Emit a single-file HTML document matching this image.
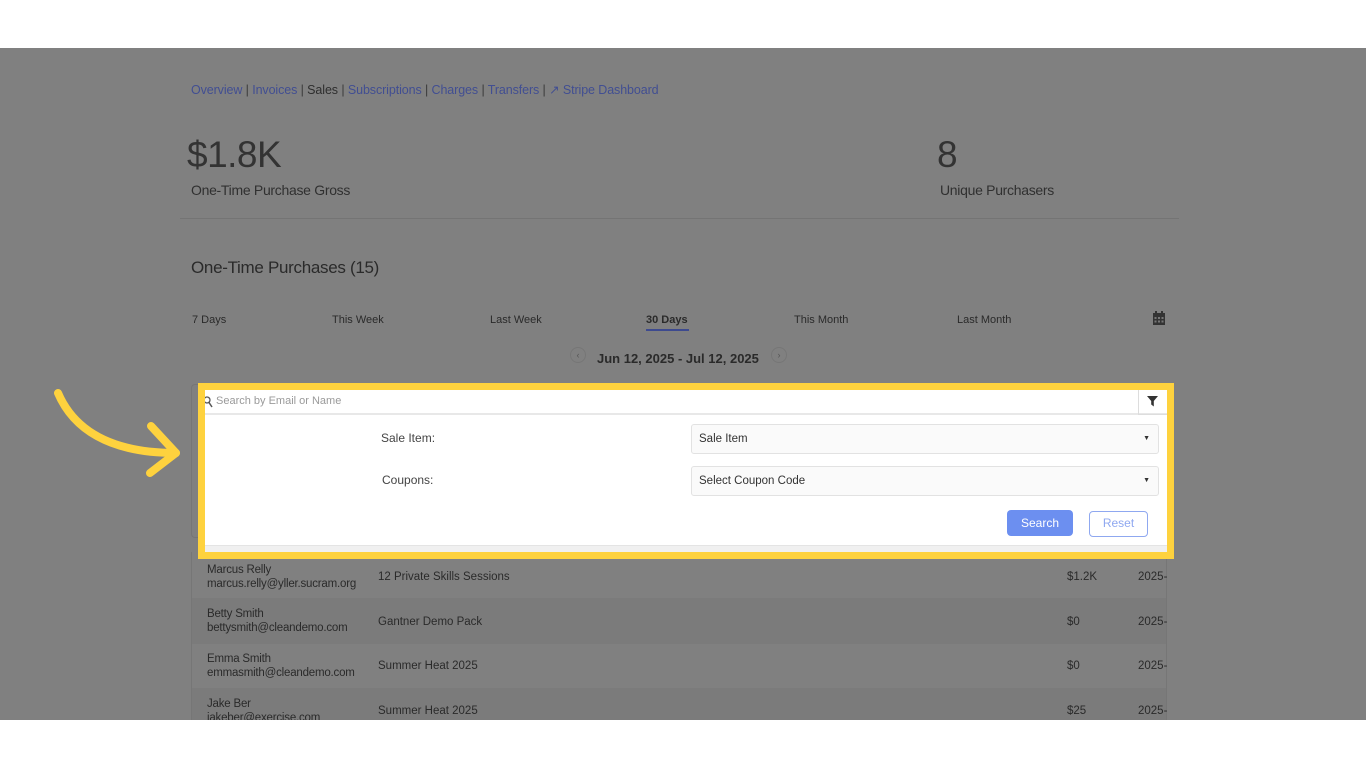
<!DOCTYPE html>
<html><head><meta charset="utf-8">
<style>
*{box-sizing:border-box;margin:0;padding:0}
body{width:1366px;height:768px;background:#fff;font-family:"Liberation Sans",sans-serif;position:relative;overflow:hidden}
#ov{position:absolute;left:0;top:48px;width:1366px;height:672px;background:#808080;overflow:hidden}
.a{position:absolute;white-space:nowrap}
.lk{color:#414e92}
.dk{color:#2e2e2e}
.row{position:absolute;left:191px;width:976px;border-left:1px solid #767676;border-right:1px solid #767676}
.t{font-size:12px;color:#2a2a2a}
.nm{line-height:14px}
</style></head><body>
<div id="ov">
  <div class="a" style="left:191px;top:34px;font-size:12.5px;letter-spacing:-0.1px;color:#3a3a3a">
    <span class="lk">Overview</span> | <span class="lk">Invoices</span> | <span class="dk">Sales</span> | <span class="lk">Subscriptions</span> | <span class="lk">Charges</span> | <span class="lk">Transfers</span> | <span class="lk">&#x2197;&#xFE0E; Stripe Dashboard</span>
  </div>
  <div class="a" style="left:187px;top:86px;font-size:37px;color:#333;font-weight:300;letter-spacing:-0.5px">$1.8K</div>
  <div class="a" style="left:191px;top:134px;font-size:14px;color:#303030;letter-spacing:-0.3px">One-Time Purchase Gross</div>
  <div class="a" style="left:937px;top:86px;font-size:37px;color:#333">8</div>
  <div class="a" style="left:940px;top:134px;font-size:14px;color:#303030;letter-spacing:-0.3px">Unique Purchasers</div>
  <div class="a" style="left:180px;top:170px;width:999px;height:1px;background:#747474"></div>
  <div class="a" style="left:191px;top:210px;font-size:17px;color:#2a2a2a;letter-spacing:-0.3px">One-Time Purchases (15)</div>
  <div class="a t" style="left:192px;top:266px;font-size:11px">7 Days</div>
  <div class="a t" style="left:332px;top:266px;font-size:11px">This Week</div>
  <div class="a t" style="left:490px;top:266px;font-size:11px">Last Week</div>
  <div class="a t" style="left:646px;top:266px;font-size:11px;font-weight:bold">30 Days</div>
  <div class="a" style="left:646px;top:281px;width:43px;height:2px;background:#3d4a8f"></div>
  <div class="a t" style="left:794px;top:266px;font-size:11px">This Month</div>
  <div class="a t" style="left:957px;top:266px;font-size:11px">Last Month</div>
  <svg class="a" style="left:1152px;top:262px" width="14" height="16" viewBox="0 0 14 16"><rect x="1" y="3" width="12" height="12" fill="#333"/><rect x="3" y="1" width="2" height="4" fill="#333"/><rect x="9" y="1" width="2" height="4" fill="#333"/><g fill="#777"><rect x="2.5" y="7" width="2" height="2"/><rect x="6" y="7" width="2" height="2"/><rect x="9.5" y="7" width="2" height="2"/><rect x="2.5" y="10.5" width="2" height="2"/><rect x="6" y="10.5" width="2" height="2"/><rect x="9.5" y="10.5" width="2" height="2"/></g></svg>
  <div class="a" style="left:570px;top:299px;width:16px;height:16px;border-radius:50%;border:1px solid #767676;font-size:9px;color:#555;text-align:center;line-height:14px">&#8249;</div>
  <div class="a" style="left:597px;top:303px;font-size:13px;color:#2a2a2a;font-weight:bold">Jun 12, 2025 - Jul 12, 2025</div>
  <div class="a" style="left:771px;top:299px;width:16px;height:16px;border-radius:50%;border:1px solid #767676;font-size:9px;color:#555;text-align:center;line-height:14px">&#8250;</div>

  <div class="a" style="left:191px;top:336px;width:15px;height:154px;border:1px solid #767676;border-right:none;border-radius:4px 0 0 4px"></div>

  <div class="row" style="top:504px;height:46px;background:#808080"></div>
  <div class="row" style="top:550px;height:46px;background:#7b7b7b"></div>
  <div class="row" style="top:596px;height:44px;background:#808080"></div>
  <div class="row" style="top:640px;height:40px;background:#7b7b7b"></div>

  <div class="a t nm" style="left:207px;top:515px;font-size:11.5px;letter-spacing:-0.2px">Marcus Relly<br>marcus.relly@yller.sucram.org</div>
  <div class="a t" style="left:378px;top:523px;font-size:11.5px">12 Private Skills Sessions</div>
  <div class="a t" style="left:1067px;top:523px;font-size:11.5px">$1.2K</div>
  <div class="a t" style="left:1138px;top:523px;font-size:11.5px">2025-</div>

  <div class="a t nm" style="left:207px;top:559px;font-size:11.5px;letter-spacing:-0.2px">Betty Smith<br>bettysmith@cleandemo.com</div>
  <div class="a t" style="left:378px;top:568px;font-size:11.5px">Gantner Demo Pack</div>
  <div class="a t" style="left:1067px;top:568px;font-size:11.5px">$0</div>
  <div class="a t" style="left:1138px;top:568px;font-size:11.5px">2025-</div>

  <div class="a t nm" style="left:207px;top:604px;font-size:11.5px;letter-spacing:-0.2px">Emma Smith<br>emmasmith@cleandemo.com</div>
  <div class="a t" style="left:378px;top:612px;font-size:11.5px">Summer Heat 2025</div>
  <div class="a t" style="left:1067px;top:612px;font-size:11.5px">$0</div>
  <div class="a t" style="left:1138px;top:612px;font-size:11.5px">2025-</div>

  <div class="a t nm" style="left:207px;top:649px;font-size:11.5px;letter-spacing:-0.2px">Jake Ber<br>jakeber@exercise.com</div>
  <div class="a t" style="left:378px;top:657px;font-size:11.5px">Summer Heat 2025</div>
  <div class="a t" style="left:1067px;top:657px;font-size:11.5px">$25</div>
  <div class="a t" style="left:1138px;top:657px;font-size:11.5px">2025-</div>

  <div class="a" style="left:198px;top:335px;width:976px;height:176px;border:7px solid #fed23e;background:#fff">
    <div class="a" style="left:0;top:0;width:962px;height:25px;border-bottom:2px solid #e8e8e8"></div>
    <svg class="a" style="left:0;top:6px" width="8" height="12" viewBox="0 0 8 12"><circle cx="2" cy="4" r="3" fill="none" stroke="#555" stroke-width="1.3"/><line x1="4" y1="6.5" x2="7" y2="11" stroke="#555" stroke-width="1.5"/></svg>
    <div class="a" style="left:11px;top:5px;font-size:11px;color:#9a9a9a">Search by Email or Name</div>
    <div class="a" style="left:933px;top:0;width:29px;height:25px;border-left:1px solid #ddd;border-bottom:1px solid #ddd"></div>
    <svg class="a" style="left:942px;top:6px" width="11" height="11" viewBox="0 0 11 11"><path d="M0 0H11L6.8 5V10.5L4.2 8.5V5Z" fill="#333"/></svg>
    <div class="a" style="left:176px;top:41px;font-size:12px;color:#444">Sale Item:</div>
    <div class="a" style="left:177px;top:83px;font-size:12px;color:#444">Coupons:</div>
    <div class="a" style="left:486px;top:34px;width:468px;height:30px;border:1px solid #e2e2e2;border-radius:3px;background:#fafafa;font-size:11.5px;color:#333;line-height:28px;padding-left:7px">Sale Item<span style="position:absolute;right:8px;font-size:7px">&#9660;</span></div>
    <div class="a" style="left:486px;top:76px;width:468px;height:30px;border:1px solid #e2e2e2;border-radius:3px;background:#fafafa;font-size:11.5px;color:#333;line-height:28px;padding-left:7px">Select Coupon Code<span style="position:absolute;right:8px;font-size:7px">&#9660;</span></div>
    <div class="a" style="left:802px;top:120px;width:66px;height:26px;border-radius:4px;background:#6c8ff0;color:#fff;font-size:12px;text-align:center;line-height:26px">Search</div>
    <div class="a" style="left:884px;top:121px;width:59px;height:26px;border-radius:4px;border:1.5px solid #8fa8f0;background:#fff;color:#8fa8f0;font-size:12px;text-align:center;line-height:23px">Reset</div>
    <div class="a" style="left:0;top:155px;width:962px;height:7px;background:#f0f0f0;border-top:1px solid #e4e4e4"></div>
  </div>

  <svg class="a" style="left:48px;top:335px" width="135" height="95" viewBox="0 0 135 95">
    <path d="M10 10 C 25 45, 60 70, 128 70" fill="none" stroke="#fed23e" stroke-width="8" stroke-linecap="round"/>
    <path d="M103 43 L128 70 L102 90" fill="none" stroke="#fed23e" stroke-width="8" stroke-linecap="round" stroke-linejoin="round"/>
  </svg>
</div>
</body></html>
